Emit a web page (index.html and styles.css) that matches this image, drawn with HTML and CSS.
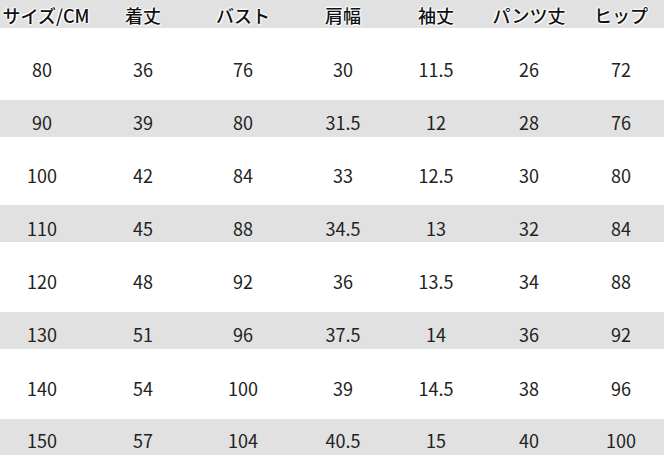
FILE: index.html
```html
<!DOCTYPE html>
<html lang="ja">
<head>
<meta charset="utf-8">
<link rel="stylesheet" href="styles.css">
</head>
<body>
<div class="sheet">
  <div class="row head">
    <div class="cell">サイズ/CM</div><div class="cell">着丈</div><div class="cell">バスト</div><div class="cell">肩幅</div><div class="cell">袖丈</div><div class="cell">パンツ丈</div><div class="cell">ヒップ</div>
  </div>
  <div class="row white r1">
    <div class="cell">80</div><div class="cell">36</div><div class="cell">76</div><div class="cell">30</div><div class="cell">11.5</div><div class="cell">26</div><div class="cell">72</div>
  </div>
  <div class="row gray">
    <div class="cell">90</div><div class="cell">39</div><div class="cell">80</div><div class="cell">31.5</div><div class="cell">12</div><div class="cell">28</div><div class="cell">76</div>
  </div>
  <div class="row white r3">
    <div class="cell">100</div><div class="cell">42</div><div class="cell">84</div><div class="cell">33</div><div class="cell">12.5</div><div class="cell">30</div><div class="cell">80</div>
  </div>
  <div class="row gray g2">
    <div class="cell">110</div><div class="cell">45</div><div class="cell">88</div><div class="cell">34.5</div><div class="cell">13</div><div class="cell">32</div><div class="cell">84</div>
  </div>
  <div class="row white">
    <div class="cell">120</div><div class="cell">48</div><div class="cell">92</div><div class="cell">36</div><div class="cell">13.5</div><div class="cell">34</div><div class="cell">88</div>
  </div>
  <div class="row gray g3">
    <div class="cell">130</div><div class="cell">51</div><div class="cell">96</div><div class="cell">37.5</div><div class="cell">14</div><div class="cell">36</div><div class="cell">92</div>
  </div>
  <div class="row white r7">
    <div class="cell">140</div><div class="cell">54</div><div class="cell">100</div><div class="cell">39</div><div class="cell">14.5</div><div class="cell">38</div><div class="cell">96</div>
  </div>
  <div class="row gray last">
    <div class="cell">150</div><div class="cell">57</div><div class="cell">104</div><div class="cell">40.5</div><div class="cell">15</div><div class="cell">40</div><div class="cell">100</div>
  </div>
</div>
</body>
</html>
```
FILE: styles.css
```css
html, body {
  margin: 0;
  padding: 0;
  background: #ffffff;
}
body {
  width: 664px;
  height: 455px;
  overflow: hidden;
  font-family: "Noto Sans CJK JP", "Noto Sans", sans-serif;
  color: #222;
}
.sheet {
  display: flex;
  flex-direction: column;
}
.row {
  display: grid;
  grid-template-columns: 84px 118px 82px 118px 68px 118px 66px;
  align-items: center;
  box-sizing: border-box;
  font-size: 18px;
  line-height: 20px;
}
.cell {
  display: flex;
  justify-content: center;
  white-space: nowrap;
}
.head {
  height: 28px;
  background: #e1e1e1;
  font-size: 18px;
  font-weight: 500;
  color: #111;
  padding-top: 2px;
  text-shadow: 0 0 2px #fff, 0 0 2px #fff, 0 0 3px #fff, 1px 1px 1px #fff, -1px -1px 1px #fff;
}
.head .cell:first-child {
  padding-left: 8px;
}
.white {
  height: 70px;
  background: #ffffff;
  padding-top: 8px;
}
.white.r1 {
  height: 72px;
  padding-top: 10px;
}
.white.r3 {
  height: 68px;
}
.white.r7 {
  padding-top: 7px;
}
.gray {
  height: 37px;
  background: #e1e1e1;
  padding-top: 7px;
}
.gray.g2 {
  padding-top: 8px;
}
.gray.g3 {
  padding-top: 6px;
}
.gray.last {
  height: 36px;
  padding-top: 5px;
}
```
